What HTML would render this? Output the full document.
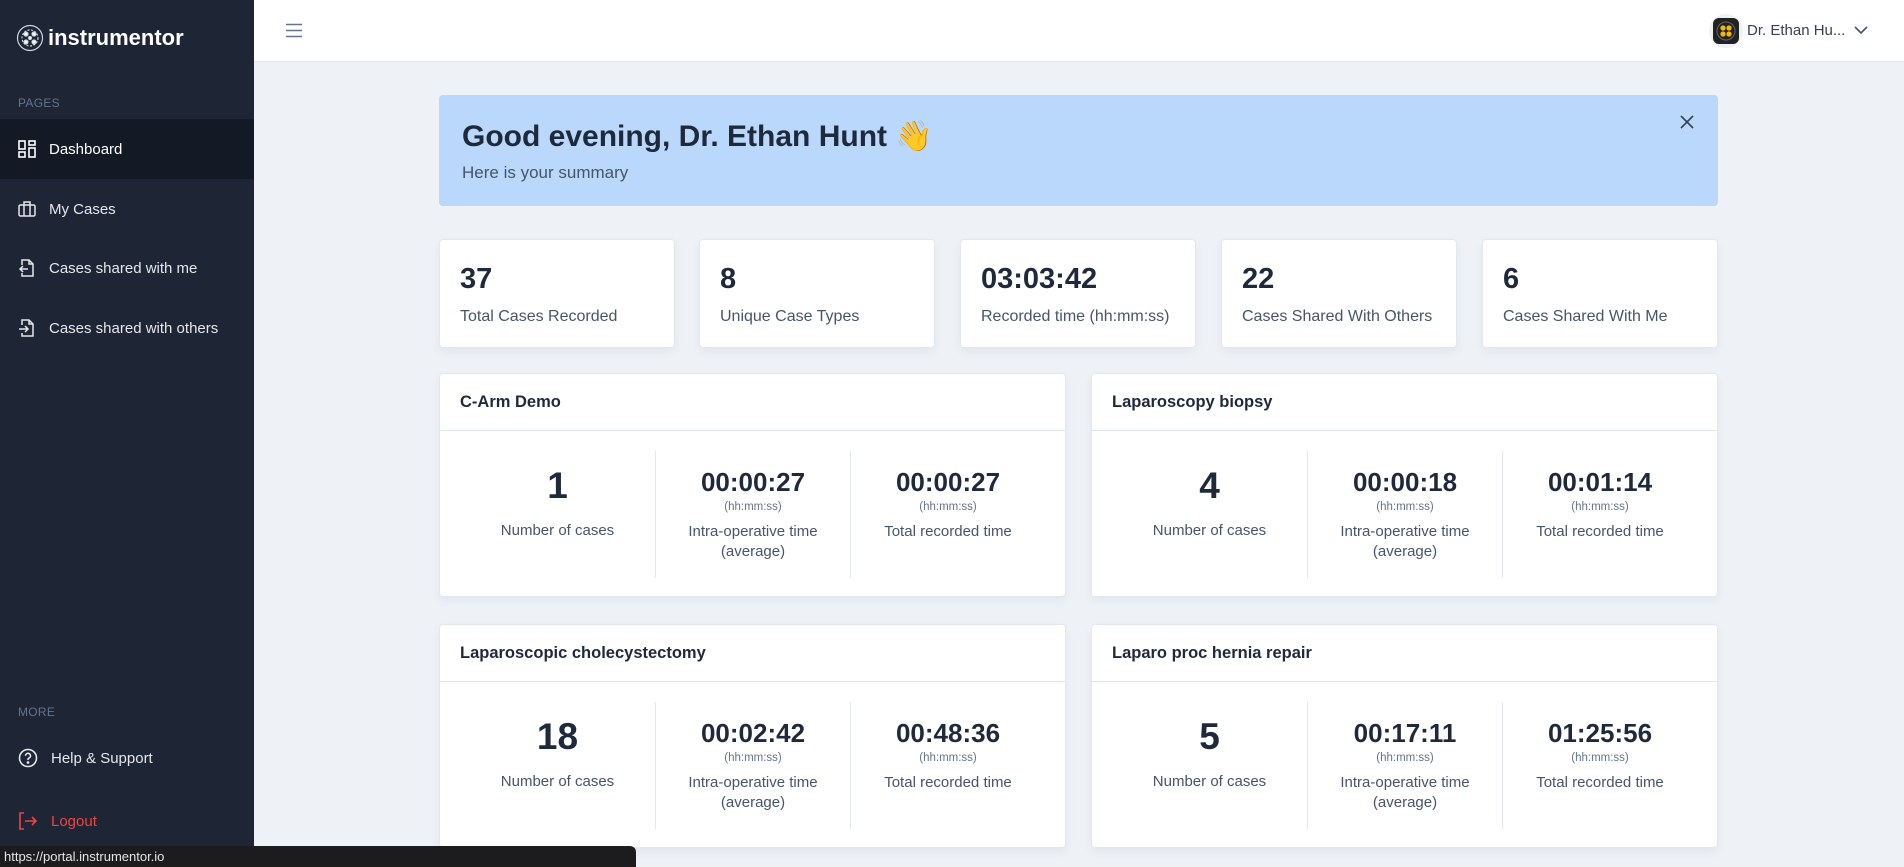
<!DOCTYPE html>
<html><head><meta charset="utf-8"><style>
*{box-sizing:border-box;margin:0;padding:0}
body{width:1904px;height:867px;overflow:hidden;background:#eef2f7;font-family:"Liberation Sans",Arial,sans-serif;color:#1e293b;position:relative}
.sb{position:absolute;left:0;top:0;width:254px;height:867px;background:#1e2535}
.logo{position:absolute;left:16px;top:24px;display:flex;align-items:center;color:#fff;font-size:22px;font-weight:700}
.sec{position:absolute;left:18px;font-size:12px;color:#64748b;letter-spacing:.3px}
.nav{position:absolute;left:0;width:254px;height:60px;display:flex;align-items:center;padding-left:18px;color:#e5e7eb;font-size:15px}
.nav svg{margin-right:13px}
.act{background:#131a26;color:#fff}
.hdr{position:absolute;left:254px;top:0;right:0;height:62px;background:#fff;border-bottom:1px solid #e2e8f0}
.banner{position:absolute;left:439px;top:95px;width:1279px;height:111px;background:#bad8fb;border-radius:4px;padding:24px 23px}
.banner h1{font-size:30px;font-weight:700;color:#1e293b}
.banner p{font-size:17px;color:#475569;margin-top:9px}
.stat{position:absolute;top:239px;width:236px;height:109px;background:#fff;border:1px solid #e2e8f0;border-radius:4px;padding:23px 20px;box-shadow:0 4px 10px rgba(15,23,42,.05)}
.stat b{display:block;font-size:29px;font-weight:700;color:#1e293b}
.stat span{display:block;font-size:16px;color:#475569;margin-top:12px}
.panel{position:absolute;width:627px;background:#fff;border:1px solid #e2e8f0;border-radius:4px;box-shadow:0 4px 10px rgba(15,23,42,.05)}
.ph{height:57px;border-bottom:1px solid #e2e8f0;padding:19px 20px;font-size:16.5px;font-weight:600;color:#1e293b}
.pb{display:flex;padding:20px 20px 18px}
.col{width:196px;height:127px;text-align:center;position:relative}
.col+.col{border-left:1px solid #e2e8f0}
.big{font-size:37px;font-weight:700;margin-top:15px;line-height:40px}
.tm{font-size:26px;font-weight:700;margin-top:16px;line-height:30px}
.un{font-size:11.5px;color:#64748b;margin-top:4px}
.lb{font-size:15px;color:#475569;line-height:20px}
.big+.lb{margin-top:15px}
.un+.lb{margin-top:9px}
.status{position:absolute;left:0;top:846px;width:636px;height:21px;background:#1c1c1e;color:#e5e5e5;font-size:13px;padding:3px 4px;border-top-right-radius:6px}
</style></head><body>
<div class="sb">
 <div class="logo"><svg width="28" height="28" viewBox="0 0 28 28" fill="none" stroke="#cbd5e1" stroke-width="1.2"><circle cx="14" cy="14" r="12.5"/><circle cx="14" cy="14" r="8" stroke-dasharray="2 1.5"/><circle cx="10" cy="10" r="2" fill="#fff"/><circle cx="18" cy="10" r="2" fill="#fff"/><circle cx="10" cy="18" r="2" fill="#fff"/><circle cx="18" cy="18" r="2" fill="#fff"/><circle cx="14" cy="14" r="1.5" fill="#fff"/></svg><span style="margin-left:4px">instrumentor</span></div>
 <div class="sec" style="top:96px">PAGES</div>
 <div class="nav act" style="top:119px"><svg width="18" height="18" viewBox="0 0 18 18" fill="none" stroke="#fff" stroke-width="1.6"><rect x="1" y="1" width="6" height="8"/><rect x="11" y="1" width="6" height="4"/><rect x="1" y="12" width="6" height="5"/><rect x="11" y="8" width="6" height="9"/></svg>Dashboard</div>
 <div class="nav" style="top:179px"><svg width="18" height="18" viewBox="0 0 18 18" fill="none" stroke="#e5e7eb" stroke-width="1.5"><rect x="1" y="5" width="16" height="11" rx="1.5"/><path d="M6 5V2h6v3M6 5v11M12 5v11"/></svg>My Cases</div>
 <div class="nav" style="top:238px"><svg width="18" height="18" viewBox="0 0 18 18" fill="none" stroke="#e5e7eb" stroke-width="1.5"><path d="M4 6V1h7l4 4v12H4v-3M11 1v4h4M10 10H2m3-3-3 3 3 3"/></svg>Cases shared with me</div>
 <div class="nav" style="top:298px"><svg width="18" height="18" viewBox="0 0 18 18" fill="none" stroke="#e5e7eb" stroke-width="1.5"><path d="M4 6V1h7l4 4v12H4v-3M11 1v4h4M1 10h9m-3-3 3 3-3 3"/></svg>Cases shared with others</div>
 <div class="sec" style="top:705px">MORE</div>
 <div class="nav" style="top:728px"><svg width="20" height="20" viewBox="0 0 20 20" fill="none" stroke="#e5e7eb" stroke-width="1.6"><circle cx="10" cy="10" r="8.5"/><path d="M7.5 7.8a2.5 2.5 0 1 1 3.2 2.4c-.5.2-.7.6-.7 1.2v.6"/><circle cx="10" cy="14.5" r=".6" fill="#e5e7eb"/></svg>Help &amp; Support</div>
 <div class="nav" style="top:791px;color:#ef4444"><svg width="20" height="20" viewBox="0 0 20 20" fill="none" stroke="#ef4444" stroke-width="1.6"><path d="M6 2H2v16h4M7 10h11m-4-4 4 4-4 4"/></svg>Logout</div>
</div>
<div class="hdr">
 <svg style="position:absolute;left:31px;top:23px" width="18" height="15" viewBox="0 0 18 15" stroke="#64748b" stroke-width="1.6"><path d="M1 1.5h16M1 7.5h16M1 13.5h16"/></svg>
 <div style="position:absolute;left:1455px;top:14px;width:34px;height:34px;border-radius:50%;background:#eef2f7"></div>
 <div style="position:absolute;left:1459px;top:18px;width:26px;height:26px;border-radius:6px;background:#222"><svg width="26" height="26" viewBox="0 0 26 26"><circle cx="13" cy="13" r="9" fill="none" stroke="#666" stroke-width="1"/><circle cx="10" cy="10" r="2.6" fill="#f5b800"/><circle cx="16" cy="10" r="2.6" fill="#f5b800"/><circle cx="10" cy="16" r="2.6" fill="#f5b800"/><circle cx="16" cy="16" r="2.6" fill="#f5b800"/></svg></div>
 <div style="position:absolute;left:1493px;top:22px;font-size:15px;color:#334155">Dr. Ethan Hu...</div>
 <svg style="position:absolute;left:1600px;top:26px" width="14" height="9" viewBox="0 0 14 9" fill="none" stroke="#475569" stroke-width="1.6"><path d="M1 1l6 6 6-6"/></svg>
</div>
<div class="banner"><h1>Good evening, Dr. Ethan Hunt 👋</h1><p>Here is your summary</p>
<svg style="position:absolute;right:24px;top:20px" width="14" height="14" viewBox="0 0 14 14" stroke="#334155" stroke-width="1.6"><path d="M1 1l12 12M13 1L1 13"/></svg></div>
<div class="stat" style="left:439px"><b>37</b><span>Total Cases Recorded</span></div>
<div class="stat" style="left:699px"><b>8</b><span>Unique Case Types</span></div>
<div class="stat" style="left:960px"><b>03:03:42</b><span>Recorded time (hh:mm:ss)</span></div>
<div class="stat" style="left:1221px"><b>22</b><span>Cases Shared With Others</span></div>
<div class="stat" style="left:1482px"><b>6</b><span>Cases Shared With Me</span></div>

<div class="panel" style="left:439px;top:373px"><div class="ph">C-Arm Demo</div><div class="pb">
<div class="col"><div class="big">1</div><div class="lb">Number of cases</div></div>
<div class="col"><div class="tm">00:00:27</div><div class="un">(hh:mm:ss)</div><div class="lb">Intra-operative time<br>(average)</div></div>
<div class="col"><div class="tm">00:00:27</div><div class="un">(hh:mm:ss)</div><div class="lb">Total recorded time</div></div></div></div>

<div class="panel" style="left:1091px;top:373px"><div class="ph">Laparoscopy biopsy</div><div class="pb">
<div class="col"><div class="big">4</div><div class="lb">Number of cases</div></div>
<div class="col"><div class="tm">00:00:18</div><div class="un">(hh:mm:ss)</div><div class="lb">Intra-operative time<br>(average)</div></div>
<div class="col"><div class="tm">00:01:14</div><div class="un">(hh:mm:ss)</div><div class="lb">Total recorded time</div></div></div></div>

<div class="panel" style="left:439px;top:624px"><div class="ph">Laparoscopic cholecystectomy</div><div class="pb">
<div class="col"><div class="big">18</div><div class="lb">Number of cases</div></div>
<div class="col"><div class="tm">00:02:42</div><div class="un">(hh:mm:ss)</div><div class="lb">Intra-operative time<br>(average)</div></div>
<div class="col"><div class="tm">00:48:36</div><div class="un">(hh:mm:ss)</div><div class="lb">Total recorded time</div></div></div></div>

<div class="panel" style="left:1091px;top:624px"><div class="ph">Laparo proc hernia repair</div><div class="pb">
<div class="col"><div class="big">5</div><div class="lb">Number of cases</div></div>
<div class="col"><div class="tm">00:17:11</div><div class="un">(hh:mm:ss)</div><div class="lb">Intra-operative time<br>(average)</div></div>
<div class="col"><div class="tm">01:25:56</div><div class="un">(hh:mm:ss)</div><div class="lb">Total recorded time</div></div></div></div>

<div class="status">https://portal.instrumentor.io</div>
</body></html>
